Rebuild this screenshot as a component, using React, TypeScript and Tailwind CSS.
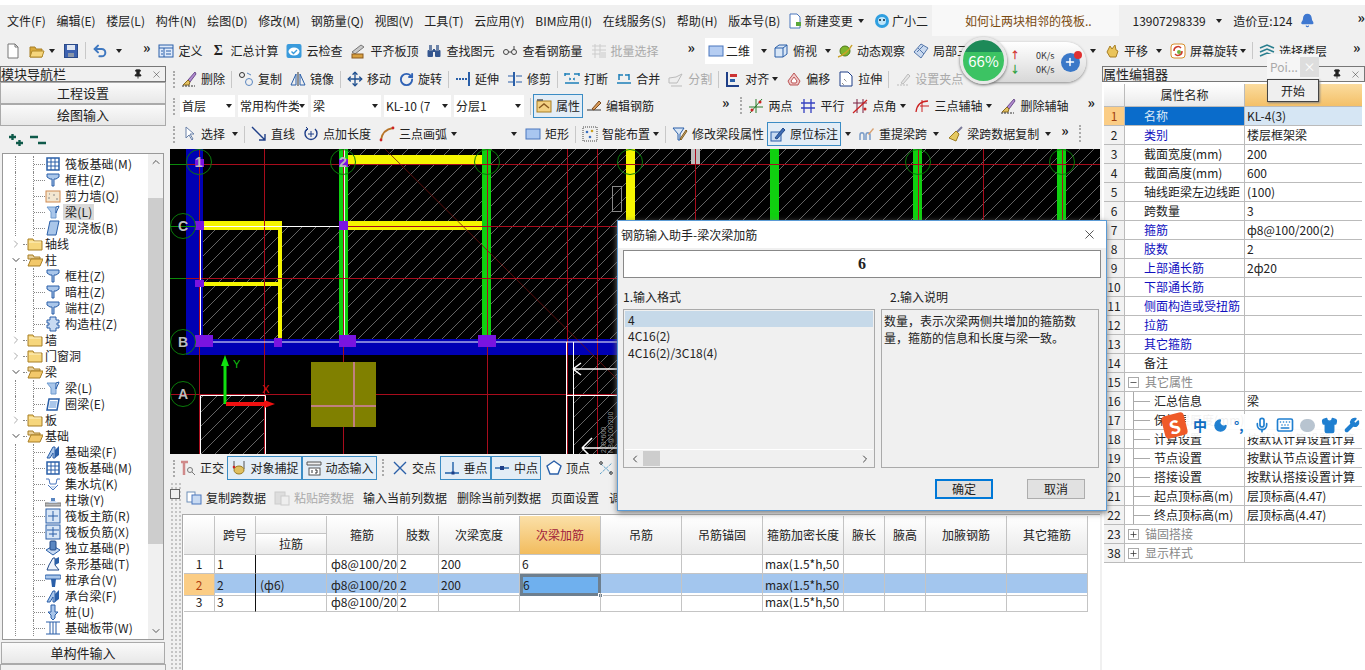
import React from 'react';
import { Move, RotateCw, Undo2, Plus, Minus, X, Pin, ChevronRight, ChevronDown, ChevronUp, ChevronLeft, Mic, Keyboard, Shirt, Wrench, Moon, Bell } from 'lucide-react';

const Svg = ({ children, s = 16 }: { children: React.ReactNode; s?: number }) => (
  <svg viewBox="0 0 16 16" width={s} height={s} fill="none" className="shrink-0">{children}</svg>
);
const B = '#2a5fa8', L = '#a9c6ea';
const colI = <Svg><path d="M2 2h12v3l-3 2H9v7H7V7H5L2 5z" fill={L} stroke={B} /></Svg>;
const raft = <Svg><rect x="2" y="2" width="12" height="12" fill="#fff" stroke={B} strokeWidth="1.5" /><path d="M2 6h12M2 10h12M6 2v12M10 2v12" stroke={B} /></Svg>;
const fbeam = <Svg><path d="M2 14L8 3h2v11H8V9l-3 5z" fill={L} stroke={B} /><path d="M10 6l4-4v9l-4 3z" fill={B} /></Svg>;
const ring = <Svg><path d="M4 3h10l-2 11H2z" fill="#fff" stroke={B} strokeWidth="1.5" /><path d="M5 5h7l-1 7H4z" fill={L} /></Svg>;
const beam = <Svg><path d="M2 3h12l-3 4v7H6V8z" fill={L} stroke="#6f9bcf" /><path d="M11 3l3-1-3 7z" fill="#fff" stroke={B} /></Svg>;
const icons: Record<string, React.ReactNode> = {
  doc: <Svg><path d="M3 1h7l3 3v11H3z" fill="#fff" stroke="#777" /><path d="M10 1v3h3" stroke="#777" /></Svg>,
  folder: <Svg><path d="M1 4h5l1 2h6v8H1z" fill="#d9a93a" stroke="#a87f25" /><path d="M3 8h12l-2 6H1z" fill="#f6d67c" stroke="#b08a2c" /></Svg>,
  save: <Svg><rect x="1.5" y="1.5" width="13" height="13" fill="#3d62b0" stroke="#2a4a88" /><rect x="4" y="2" width="8" height="5" fill="#dfe6f2" /><rect x="5" y="10" width="6" height="4" fill="#8a96a8" /></Svg>,
  undo: <Undo2 size={16} strokeWidth={3} color="#3f78c0" className="shrink-0" />,
  define: <Svg><rect x="1" y="2" width="14" height="12" fill="#dfeafa" stroke={B} /><path d="M1 5h14M6 5v9M3 8h2M3 11h2M8 8h5M8 11h5" stroke={B} /></Svg>,
  sigma: <span className="w-4 shrink-0 text-center font-['Liberation_Serif',serif] text-[14px] font-bold leading-4">Σ</span>,
  cloud: <Svg><rect x="0.5" y="1" width="15" height="14" rx="2" fill="#3a9bdc" /><ellipse cx="8" cy="8.5" rx="5.5" ry="4" fill="#fff" /><path d="M5.5 8.5L7.5 10.5L11 7" stroke="#3a9bdc" strokeWidth="1.4" /></Svg>,
  level: <Svg><path d="M2 9l9-7 3 2-9 7z" fill="#c9c9c9" stroke="#777" /><rect x="2" y="11" width="11" height="4" fill="#d8a040" stroke="#8a5a20" /></Svg>,
  binoc: <Svg><rect x="1.5" y="7" width="5.5" height="7" rx="1" fill="#34568f" /><rect x="9" y="7" width="5.5" height="7" rx="1" fill="#34568f" /><rect x="3" y="2" width="3" height="6" fill="#6c83a8" /><rect x="10" y="2" width="3" height="6" fill="#6c83a8" /><rect x="7" y="6" width="2" height="3" fill="#34568f" /></Svg>,
  glasses: <Svg><circle cx="4" cy="9" r="2.5" stroke="#444" /><circle cx="12" cy="9" r="2.5" stroke="#444" /><path d="M6.5 9h3M12 7V3" stroke="#444" /></Svg>,
  batch: <Svg><path d="M1 3h14M1 7h14M1 11h14M4 1v14M9 1v14" stroke="#ccc" /><rect x="9" y="9" width="6" height="6" fill="#ddd" /></Svg>,
  view2d: <Svg><rect x="1" y="3" width="14" height="10" fill="#b5cdf2" stroke="#4a76bd" /></Svg>,
  cube: <Svg><path d="M2 5l4-3h8v9l-4 3H2z" fill="#d8e6f6" stroke={B} /><path d="M2 5h8v9M10 5l4-3" stroke={B} /></Svg>,
  orbit: <Svg><circle cx="8" cy="8" r="5" fill="#7eb52c" stroke="#4f7a18" /><path d="M1 14C5 13 12 8 15 2" stroke="#caa12a" strokeWidth="1.5" /></Svg>,
  local3d: <Svg><path d="M8 1l7 4-7 10-7-6z" fill="#c9d9ef" stroke="#5577aa" /><path d="M5 5l6 6M10 3L4 9" stroke="#5577aa" /></Svg>,
  pan: <Svg><path d="M3 9l3-6 2 3 3-4 1 5 2 1-2 6H6z" fill="#eac45a" stroke="#a87f25" /></Svg>,
  rotate: <Svg><rect x="1" y="1" width="14" height="14" rx="3" fill="#fff" stroke="#d88d2a" /><path d="M4 8a4 4 0 017-3M12 8a4 4 0 01-7 3" stroke="#cc3a2a" strokeWidth="1.5" /><circle cx="9" cy="9" r="2" fill="#6fb43f" /></Svg>,
  floors: <Svg><path d="M1 5l7-3 7 3M1 9l7-3 7 3M1 13l7-3 7 3" stroke="#2a7f8f" strokeWidth="1.6" /></Svg>,
  del: <Svg><path d="M14 1L7 9l2 2 6-8z" fill="#b28ad0" stroke="#6b4d8c" /><path d="M7 9L2 14h6l1-3z" fill="#e2c060" stroke="#8b6b20" /><path d="M1 15h13" stroke="#333" strokeDasharray="2 1" /></Svg>,
  copy: <Svg><circle cx="4" cy="4" r="2.5" stroke="#333" /><circle cx="11" cy="11" r="3.5" stroke="#5a86c0" /><path d="M9 2l4 2" stroke="#5a86c0" /></Svg>,
  mirror: <Svg><path d="M8 1v14" stroke="#333" /><path d="M6 3L1 14h5zM10 3l5 11h-5z" stroke={B} /></Svg>,
  move: <Move size={16} color="#1f4f8f" className="shrink-0" />,
  rot: <RotateCw size={15} strokeWidth={3} color="#2f62b5" className="shrink-0" />,
  extend: <Svg><path d="M14 1v14" stroke={B} strokeWidth="2" /><path d="M1 8h11" stroke={B} strokeDasharray="2 1" strokeWidth="2" /></Svg>,
  trim: <Svg><path d="M7 1v14" stroke={B} strokeWidth="2" /><path d="M1 5h5M1 11h5M9 5h6M9 11h6" stroke={B} /></Svg>,
  brk: <Svg><path d="M1 3h5M10 3h5M1 12h14M1 5v-3M15 5V2" stroke="#1c7fb8" strokeWidth="1.5" /><path d="M5 7l2 1-2 1M11 7L9 8l2 1" stroke="#1c7fb8" /></Svg>,
  merge: <Svg><path d="M1 12h14M3 4h4M9 4h4M3 9V3M13 9V3" stroke="#1c7fb8" strokeWidth="1.5" /></Svg>,
  split: <Svg><path d="M1 12h8l5-9-6 3-7 1z" fill="#eee" stroke="#bbb" /><path d="M3 15h11" stroke="#bbb" /></Svg>,
  align: <Svg><path d="M2 1v14h12" stroke="#1f3f88" strokeWidth="2" /><rect x="5" y="3" width="7" height="3" fill="#c33" /><rect x="5" y="8" width="5" height="3" fill={B} /></Svg>,
  offset: <Svg><path d="M8 2l6 8-2 4H4l-2-4z" fill="#f0c8c8" stroke="#b55" /><path d="M8 6l3 4-1 2H6l-1-2z" fill="#fff" stroke="#b55" /></Svg>,
  stretch: <Svg><path d="M2 1h8l4 4v10H2z" fill="#fff" stroke="#1f3f88" /><path d="M6 8l3 3M4 12l2 2" stroke="#555" strokeDasharray="1 1" /></Svg>,
  setp: <Svg><path d="M2 14h12" stroke="#bbb" strokeDasharray="2 1" /><path d="M6 12l7-9 2 2-7 8z" fill="#e5e5e5" stroke="#bbb" /></Svg>,
  attr: <Svg><rect x="1" y="3" width="14" height="11" fill="#f3d183" stroke="#a87f25" /><path d="M3 10l5-4 5 4" stroke="#8a5a20" strokeWidth="1.4" /><path d="M1 2h6" stroke="#555" strokeWidth="1.5" /></Svg>,
  edit: <Svg><path d="M1 12h14" stroke="#333" /><path d="M6 11l7-8 2 2-7 7z" fill="#d89b5a" stroke="#7a4a20" /></Svg>,
  two: <Svg><path d="M2 15L14 1M1 9h14M8 1v14" stroke="#2a7a2a" /><circle cx="4" cy="12" r="1.5" fill="#c22" /><circle cx="12" cy="4" r="1.5" fill="#c22" /></Svg>,
  par: <Svg><path d="M4 1v14M11 1v14M1 5h14M1 10h14" stroke="#3440c0" strokeWidth="1.3" /></Svg>,
  ang: <Svg><path d="M5 1v14M11 1v14M1 5h14" stroke="#7a1f3f" /><path d="M1 15L15 2" stroke="#c22" strokeWidth="1.3" /><circle cx="13" cy="11" r="1.5" fill="#c22" /></Svg>,
  three: <Svg><path d="M2 14C3 6 8 3 14 3" stroke="#c22" strokeWidth="1.3" /><path d="M8 2v12M6 8h9" stroke="#c22" /></Svg>,
  sel: <Svg><path d="M5 1v11l3-3 3 5 1-1-3-5h4z" fill="#fff" stroke="#6880a8" /></Svg>,
  line: <Svg><path d="M1 1l13 13M14 8v6H8" stroke="#1f3f88" strokeWidth="1.4" /></Svg>,
  ptlen: <Svg><path d="M4 3a6 6 0 108 0" stroke="#1f3f88" strokeWidth="1.4" /><path d="M8 5v6M5 8h6M3 1l2 2-2 2" stroke="#1f3f88" /></Svg>,
  arc: <Svg><path d="M2 14C3 7 7 3 14 2" stroke="#b8762a" strokeWidth="1.8" /><circle cx="2" cy="14" r="1.4" fill="#c22" /><circle cx="14" cy="2" r="1.4" fill="#c22" /></Svg>,
  rect: <Svg><rect x="1" y="3" width="14" height="10" fill="#a9c6f0" stroke="#4a76bd" /></Svg>,
  smart: <Svg><rect x="1" y="1" width="14" height="14" stroke="#444" strokeDasharray="1 1" /><circle cx="5" cy="6" r="1.3" fill="#3a6fc0" /><circle cx="10" cy="5" r="1.3" fill="#c8a020" /><circle cx="8" cy="11" r="1.3" fill="#3a6fc0" /></Svg>,
  mod: <Svg><path d="M1 2h11L8 8v6H6V8z" fill="#d8e6f6" stroke={B} /><path d="M8 13l6-9 1 1-6 9z" fill="#d8b070" stroke="#7a5a20" /></Svg>,
  inplace: <Svg><rect x="1" y="6" width="10" height="9" fill="#c8daf2" stroke={B} /><path d="M5 12L13 2l2 2-8 9z" fill="#3f6db5" stroke="#234a88" /></Svg>,
  rebeam: <Svg><path d="M1 14V9c0-3 4-3 4 0v5M7 14V9c0-3 4-3 4 0v5" stroke="#7a9cc8" strokeWidth="1.5" /><path d="M9 8l5-6 1 1-5 6z" fill="#d8a070" /></Svg>,
  broom: <Svg><path d="M15 1L9 7" stroke="#7a7a9a" strokeWidth="2" /><path d="M9 5l3 3-3 7-7-3z" fill="#e5c860" stroke="#9a7a20" /></Svg>,
  ortho: <Svg><path d="M1 2h7M4 2v13" stroke="#d08a8a" strokeWidth="2.5" /><circle cx="10" cy="10" r="2.5" stroke="#777" /><path d="M12 12l3 3" stroke="#777" /></Svg>,
  snap: <Svg><path d="M3 1v8M13 1v8" stroke="#555" /><ellipse cx="8" cy="10" rx="5" ry="4" fill="#e0c060" stroke="#9a7a20" /><circle cx="3" cy="7" r="1.3" fill="#c22" /></Svg>,
  dyn: <Svg><path d="M1 2h14v3H1z" fill="#eee" stroke="#555" /><rect x="3" y="8" width="11" height="7" fill="#fff" stroke="#555" /><path d="M6 10v3M9 10h2v3H9" stroke="#333" /></Svg>,
  cross: <Svg><path d="M2 2l12 12M14 2L2 14" stroke={B} strokeWidth="1.4" /></Svg>,
  perp: <Svg><path d="M1 13h14M9 2v11" stroke="#1f5fa8" strokeWidth="1.4" /><rect x="7.5" y="11.5" width="3" height="3" fill="#1f3f88" /></Svg>,
  mid: <Svg><path d="M1 8h14" stroke="#1f5fa8" strokeWidth="1.4" /><rect x="6" y="6" width="4" height="4" fill="#1f3f88" /></Svg>,
  vert: <Svg><path d="M8 1l7 5-3 8H4L1 6z" fill="#fff" stroke={B} strokeWidth="1.4" /></Svg>,
  near: <Svg><path d="M2 14L14 3M3 4l10 9" stroke="#1c7fb8" strokeDasharray="1 1" /><circle cx="3" cy="3" r="1.3" stroke="#333" /><circle cx="13" cy="13" r="1.3" stroke="#333" /></Svg>,
  copyS: <Svg><rect x="1" y="2" width="8" height="10" fill="#fff" stroke="#6f8fb8" /><rect x="6" y="5" width="9" height="9" fill="#c8daf2" stroke="#4a76bd" /></Svg>,
  paste: <Svg><rect x="1" y="2" width="10" height="12" fill="#ddd" stroke="#ccc" /><rect x="7" y="6" width="8" height="9" fill="#eee" stroke="#ccc" /></Svg>,
  wall: <Svg><rect x="1" y="3" width="14" height="11" fill="#f3e6d0" stroke="#d08a50" /><path d="M3 10h2M8 7h2M11 11h2M4 6h1" stroke="#888" /></Svg>,
  col: colI, raft, beam, ring, fbeam,
  slab: <Svg><path d="M5 1h9l-3 14H2z" fill="#a9c6ea" stroke={B} /></Svg>,
  constr: <Svg><path d="M5 1h6v3h3v3h-2v2h2v3h-3v3H5v-3H2V9h2V7H2V4h3z" fill="#c8daf2" stroke={B} /></Svg>,
  pit: <Svg><path d="M1 3h3l1 5h6l1-5h3M3 9l5 5 5-5" stroke="#4a76bd" /><path d="M5 10h6l-3 3z" fill="#c8daf2" /></Svg>,
  pier: <Svg><rect x="0" y="11" width="16" height="3" fill="#bbb" stroke="#777" /><path d="M6 10V6h4v4z" fill="#5a86c0" /><path d="M3 11l3-2h4l3 2z" fill="#c8daf2" /></Svg>,
  main: <Svg><rect x="1" y="1" width="14" height="14" fill="#d8e6f6" stroke={B} /><path d="M3 8h10M8 3v10" stroke={B} /></Svg>,
  neg: <Svg><rect x="1" y="1" width="14" height="14" fill="#d8e6f6" stroke={B} /><path d="M2 6h12M4 10h8M8 3v10" stroke={B} /></Svg>,
  iso: <Svg><path d="M1 10l7-4 7 4-7 5z" fill="#c8daf2" stroke={B} /><rect x="5" y="1" width="6" height="9" rx="1" fill="#5a86c0" stroke="#234a88" /></Svg>,
  strip: <Svg><path d="M2 14l2-5 4-7h2v7l4 5z" fill="#eef3fb" stroke="#234a88" /><path d="M10 3l4-2v6l-4 2z" fill={B} /></Svg>,
  cap: <Svg><rect x="0" y="3" width="16" height="4" rx="1" fill="#a9c6ea" stroke={B} /><path d="M6 7h5l-1 8H7z" fill={B} /></Svg>,
  pile: <Svg><path d="M6 1h4v7h3l-3 3v3l-2 2-2-2v-3L3 8h3z" fill="#a9c6ea" stroke={B} /></Svg>,
  band: <Svg><path d="M1 2h14M1 14h14M5 2v12M11 2v12M8 2v12" stroke={B} /></Svg>,
};

const Caret = () => (
  <svg width="6" height="4" viewBox="0 0 6 4" className="shrink-0"><path d="M0 0h6L3 4z" fill="#222" /></svg>
);
const Sep = () => <span className="mx-[-2px] h-[17px] w-px shrink-0 bg-[#c8c8c8]" />;
const Grip = ({ c = '' }: { c?: string }) => <span className={`h-[17px] w-0 shrink-0 border-l-2 border-dotted border-[#aaa] ${c}`} />;
const More = ({ c = '' }: { c?: string }) => <span className={`mb-[8px] text-[14px] font-bold leading-4 text-[#222] ${c}`}>»</span>;

const Tool = ({ i, t, dis, active, w }: { i: string; t: string; dis?: boolean; active?: boolean; w?: string }) => (
  <div className={`flex shrink-0 items-center gap-[4px] whitespace-nowrap ${dis ? 'text-[#aaa]' : ''} ${active ? 'h-[24px] justify-center border border-[#3b8cc4] bg-[#e3edf6]' : ''} ${w ?? ''}`}>
    {icons[i]}
    <span>{t}</span>
  </div>
);
const Combo = ({ t, w }: { t: string; w: string }) => (
  <div className={`flex h-[22px] shrink-0 items-center justify-between overflow-hidden whitespace-nowrap bg-white pl-[2px] pr-[3px] ${w}`}>
    <span className="overflow-hidden">{t}</span><Caret />
  </div>
);

const menu = ['文件(F)', '编辑(E)', '楼层(L)', '构件(N)', '绘图(D)', '修改(M)', '钢筋量(Q)', '视图(V)', '工具(T)', '云应用(Y)', 'BIM应用(I)', '在线服务(S)', '帮助(H)', '版本号(B)'];

type Row = { l: 0 | 1; i: string; t: string; open?: boolean; sel?: boolean };
const tree: Row[] = [
  { l: 1, i: 'raft', t: '筏板基础(M)' }, { l: 1, i: 'col', t: '框柱(Z)' }, { l: 1, i: 'wall', t: '剪力墙(Q)' }, { l: 1, i: 'beam', t: '梁(L)', sel: true }, { l: 1, i: 'slab', t: '现浇板(B)' },
  { l: 0, i: 'c', t: '轴线' }, { l: 0, i: 'o', t: '柱', open: true }, { l: 1, i: 'col', t: '框柱(Z)' }, { l: 1, i: 'col', t: '暗柱(Z)' }, { l: 1, i: 'col', t: '端柱(Z)' }, { l: 1, i: 'constr', t: '构造柱(Z)' },
  { l: 0, i: 'c', t: '墙' }, { l: 0, i: 'c', t: '门窗洞' }, { l: 0, i: 'o', t: '梁', open: true }, { l: 1, i: 'beam', t: '梁(L)' }, { l: 1, i: 'ring', t: '圈梁(E)' },
  { l: 0, i: 'c', t: '板' }, { l: 0, i: 'o', t: '基础', open: true }, { l: 1, i: 'fbeam', t: '基础梁(F)' }, { l: 1, i: 'raft', t: '筏板基础(M)' }, { l: 1, i: 'pit', t: '集水坑(K)' }, { l: 1, i: 'pier', t: '柱墩(Y)' },
  { l: 1, i: 'main', t: '筏板主筋(R)' }, { l: 1, i: 'neg', t: '筏板负筋(X)' }, { l: 1, i: 'iso', t: '独立基础(P)' }, { l: 1, i: 'strip', t: '条形基础(T)' }, { l: 1, i: 'cap', t: '桩承台(V)' }, { l: 1, i: 'fbeam', t: '承台梁(F)' }, { l: 1, i: 'pile', t: '桩(U)' }, { l: 1, i: 'band', t: '基础板带(W)' },
];
const FolderC = () => <Svg><path d="M1 3h5l1 2h8v9H1z" fill="#f6d67c" stroke="#a87f25" /><path d="M2 6h12" stroke="#fff3c8" /></Svg>;
const FolderO = () => <Svg><path d="M1 3h5l1 2h6v2H1z" fill="#e8cf98" stroke="#a87f25" /><path d="M4 7h12l-3 7H1z" fill="#f2c86a" stroke="#a87f25" /></Svg>;

const TreeRow = ({ r }: { r: Row }) =>
  r.l === 0 ? (
    <div className="flex h-4 items-center whitespace-nowrap">
      <span className="flex w-[20px] shrink-0 justify-end pr-[1px]">
        {r.open ? <ChevronDown size={12} color="#444" /> : <ChevronRight size={12} color="#aaa" />}
      </span>
      <span className="w-[4px] shrink-0 border-t border-dotted border-[#888]" />
      {r.open ? <FolderO /> : <FolderC />}
      <span className="ml-[2px]">{r.t}</span>
    </div>
  ) : (
    <div className="flex h-4 items-center whitespace-nowrap">
      <span className="ml-[12px] h-full w-[18px] shrink-0 border-l border-dotted border-[#888]" />
      <span className="flex h-full w-[12px] shrink-0 items-center border-l border-dotted border-[#888]"><span className="w-full border-t border-dotted border-[#888]" /></span>
      {icons[r.i]}
      <span className={`ml-[2px] px-[2px] tracking-[0.2px] ${r.sel ? 'bg-[#d9d9d9]' : ''}`}>{r.t}</span>
    </div>
  );

const PanelTitle = ({ t }: { t: string }) => (
  <div className="flex h-[16px] items-center justify-between border border-[#777] bg-[#f0f0f0] pr-[3px] text-[13px] leading-[14px]">
    <span>{t}</span>
    <span className="flex items-center gap-[8px]"><Pin size={10} fill="#222" color="#222" /><X size={11} strokeWidth={1} color="#222" /></span>
  </div>
);
const SideBtn = ({ t }: { t: string }) => (
  <div className="flex h-[22px] items-center justify-center border border-[#aaa] bg-[linear-gradient(#fafafa,#e8e8e8)] text-[13px]">{t}</div>
);

const props: { n: string; name: string; v?: string; blue?: boolean; sub?: boolean; grp?: '-' | '+'; sel?: boolean }[] = [
  { n: '1', name: '名称', v: 'KL-4(3)', sel: true }, { n: '2', name: '类别', v: '楼层框架梁', blue: true }, { n: '3', name: '截面宽度(mm)', v: '200' }, { n: '4', name: '截面高度(mm)', v: '600' },
  { n: '5', name: '轴线距梁左边线距', v: '(100)' }, { n: '6', name: '跨数量', v: '3' }, { n: '7', name: '箍筋', v: 'ф8@100/200(2)', blue: true }, { n: '8', name: '肢数', v: '2', blue: true },
  { n: '9', name: '上部通长筋', v: '2ф20', blue: true }, { n: '10', name: '下部通长筋', blue: true }, { n: '11', name: '侧面构造或受扭筋', blue: true }, { n: '12', name: '拉筋', blue: true }, { n: '13', name: '其它箍筋', blue: true }, { n: '14', name: '备注' },
  { n: '15', name: '其它属性', grp: '-' }, { n: '16', name: '汇总信息', v: '梁', sub: true }, { n: '17', name: '保护层厚度(mm)', sub: true }, { n: '18', name: '计算设置', v: '按默认计算设置计算', sub: true }, { n: '19', name: '节点设置', v: '按默认节点设置计算', sub: true },
  { n: '20', name: '搭接设置', v: '按默认搭接设置计算', sub: true }, { n: '21', name: '起点顶标高(m)', v: '层顶标高(4.47)', sub: true }, { n: '22', name: '终点顶标高(m)', v: '层顶标高(4.47)', sub: true }, { n: '23', name: '锚固搭接', grp: '+' }, { n: '38', name: '显示样式', grp: '+' },
];

const gridCols = 'w-[904px] grid-cols-[31px_41px_71px_71px_41px_81px_81px_81px_81px_81px_41px_41px_81px_81px]';
const Head = ({ t, hot }: { t: string; hot?: boolean }) => (
  <div className={`flex items-center justify-center whitespace-nowrap border-r border-b border-[#c4c4c4] ${hot ? 'bg-[linear-gradient(#fbe0a8,#f2bc5e)] text-[#a0203a]' : 'bg-[linear-gradient(#fff,#eaeaea)]'}`}>{t}</div>
);
const rows = [
  { n: '1', c: ['1', '', 'ф8@100/20', '2', '200', '6'] },
  { n: '2', c: ['2', '(ф6)', 'ф8@100/20', '2', '200', '6'], on: true },
  { n: '3', c: ['3', '', 'ф8@100/20', '2', '', ''] },
];

const Canvas = () => {
  const red = '#a80c1c';
  const vs = [29, 94, 173, 317, 397, 427, 525, 748, 813, 892];
  const hs = [15, 77, 129, 245];
  const circles: [number, number, string][] = [[29, 13, '1'], [173, 13, '2'], [317, 13, ''], [13, 77, 'C'], [13, 193, 'B'], [13, 245, 'A'], [460, 13, ''], [748, 13, ''], [892, 13, '']];
  const purple: number[][] = [[25, 10, 9, 8], [169, 10, 9, 8], [25, 72, 9, 9], [169, 72, 9, 9], [25, 131, 9, 7], [25, 186, 18, 12], [104, 189, 8, 9], [169, 186, 17, 12], [308, 186, 18, 12]];
  return (
    <svg width="930" height="305" viewBox="0 0 930 305" className="block shrink-0">
      <defs>
        <pattern id="hatch" width="14" height="14" patternUnits="userSpaceOnUse">
          <path d="M-1 15L15 -1" stroke="#c8c8c8" strokeWidth="0.5" />
        </pattern>
      </defs>
      <rect width="930" height="305" fill="#000" />
      <rect x="178" width="752" height="190" fill="url(#hatch)" />
      <rect x="31" y="78" width="140" height="112" fill="url(#hatch)" />
      <rect x="31" y="247" width="64" height="58" fill="url(#hatch)" />
      <rect x="403" y="195" width="44" height="110" fill="url(#hatch)" />
      <rect x="16" width="17" height="190" fill="#0000b4" />
      <rect x="16" y="190" width="432" height="16" fill="#0000b4" />
      <rect x="169" width="9" height="186" fill="#10d010" />
      <rect x="173" width="2" height="186" fill="#f2f2f2" />
      {[312, 600, 743, 887].map(x => <rect key={x} x={x} width="9" height="190" fill="#10d010" />)}
      <rect x="456" width="9" height="75" fill="#f5f500" />
      <rect x="178" y="6" width="134" height="9" fill="#f5f500" />
      <rect x="178" y="72" width="134" height="9" fill="#f5f500" />
      <rect x="33" y="72" width="79" height="9" fill="#f5f500" />
      <rect x="108" y="78" width="4" height="111" fill="#f5f500" />
      <rect x="33" y="133" width="75" height="4" fill="#f5f500" />
      <rect x="521" width="9" height="15" fill="#bbb" />
      <rect x="442.5" y="37.5" width="9" height="25" stroke="#888" fill="none" />
      <path d="M215 0L447 230" stroke="#701010" strokeWidth="0.8" />
      {hs.map(y => <line key={y} x1="0" x2="930" y1={y + 0.5} y2={y + 0.5} stroke={red} />)}
      {vs.map(x => <line key={x} y1="0" y2="305" x1={x + 0.5} x2={x + 0.5} stroke={red} />)}
      <path d="M0 15.5H16M0 77.5H30M0 129.5H16" stroke="#0a8a0a" />
      <path d="M30.5 193V77.5H173M30.5 193H448M30.5 305V246.5H95.5V305M396.5 193V305M403.5 193V305M396 246.5H448" stroke="#fff" fill="none" />
      <path d="M403 220h44M403 220l8-6M403 220l8 6M412 299h36M412 299l10-10M412 299l10 10" stroke="#fff" strokeWidth="1.5" fill="none" />
      {purple.map((p, i) => <rect key={i} x={p[0]} y={p[1]} width={p[2]} height={p[3]} fill="#7a14e0" />)}
      {circles.map(([x, y, t], i) => (
        <g key={i}>
          <circle cx={x} cy={y} r="12.5" stroke="#0a7a0a" fill="none" />
          {t && <text x={x} y={y + 5} textAnchor="middle" fontSize="14" fontWeight="700" fontFamily="Liberation Sans" fill="#bbb">{t}</text>}
        </g>
      ))}
      <rect x="141" y="213" width="65" height="65" fill="#808000" />
      <path d="M141 257H206M184 213V278" stroke="#c08080" strokeWidth="2" />
      <path d="M55 255V215" stroke="#10e010" strokeWidth="3" /><path d="M55 206l-4 11h8z" fill="#10e010" />
      <path d="M56 255H96" stroke="#f01010" strokeWidth="4" /><path d="M105 255l-11-4v8z" fill="#f01010" />
      <text x="63" y="219" fontSize="11" fontFamily="Liberation Sans" fill="#10c010">Y</text>
      <text x="92" y="244" fontSize="11" fontFamily="Liberation Sans" fill="#e01010">X</text>
      <text transform="translate(436 304) rotate(-90)" fontSize="7" fontFamily="Liberation Sans" fill="#999">200*600</text>
      <text transform="translate(443 304) rotate(-90)" fontSize="7" fontFamily="Liberation Sans" fill="#999">N8@100/200</text>
    </svg>
  );
};

export default function App() {
  return (
    <div className="relative h-[670px] w-[1365px] overflow-hidden bg-[#f0f0f0] font-['Noto_Sans_CJK_SC','Liberation_Sans',sans-serif] text-[12px] leading-[16px] text-[#222]">
      <div className="h-[5px] bg-white" />
      {/* menu */}
      <div className="flex h-[31px] items-center gap-[10.7px] whitespace-nowrap pl-[7px]">
        {menu.map(m => <span key={m}>{m}</span>)}
        <span className="ml-[-4px]"><Svg><path d="M3 1h7l3 3v11H3z" fill="#fff" stroke="#4a76bd" /><path d="M9 9h5v4H9z" fill="#5aa83a" /></Svg></span>
        <span className="ml-[-9px] flex items-center gap-[5px]">新建变更<Caret /></span>
        <Svg><circle cx="8" cy="8" r="7" fill="#2f9fe0" /><circle cx="8" cy="8" r="4" fill="#bfe6fa" /><circle cx="6" cy="7" r="1" fill="#123" /><circle cx="10" cy="7" r="1" fill="#123" /></Svg>
        <span className="ml-[-9px]">广小二</span>
        <div className="ml-[-7px] flex h-[31px] w-[190px] items-center justify-center bg-[#f8f8f8] pl-[6px] text-[#7a4a10]">如何让两块相邻的筏板..</div>
        <span className="ml-[3px]">13907298339</span>
        <Caret />
        <span>造价豆:124</span>
        <Bell size={15} fill="#3f78d0" color="#3f78d0" className="ml-[-3px]" />
        <More c="ml-[32px]" />
      </div>
      {/* toolbar */}
      <div className="flex h-[29px] items-center gap-[8px] whitespace-nowrap pl-[5px]">
        {icons.doc}
        <span className="flex items-center gap-[4px]">{icons.folder}<Caret /></span>
        {icons.save}
        <Sep />
        {icons.undo}
        <Caret />
        <More c="ml-[13px]" />
        <Tool i="define" t="定义" />
        <Tool i="sigma" t="汇总计算" />
        <Tool i="cloud" t="云检查" />
        <Tool i="level" t="平齐板顶" />
        <Tool i="binoc" t="查找图元" />
        <Tool i="glasses" t="查看钢筋量" />
        <Tool i="batch" t="批量选择" dis />
        <More c="ml-[21px]" />
        <div className="ml-[2px] flex h-[26px] items-center gap-[2px] bg-white px-[3px]">{icons.view2d}<span>二维</span></div>
        <Caret />
        <Tool i="cube" t="俯视" w="ml-[-2px]" />
        <Caret />
        <Tool i="orbit" t="动态观察" w="ml-[-2px]" />
        <Tool i="local3d" t="局部三维" />
        <span className="ml-[101px]"><Caret /></span>
        <Tool i="pan" t="平移" />
        <Caret />
        <Tool i="rotate" t="屏幕旋转" />
        <span className="ml-[-6px]"><Caret /></span>
        <Sep />
        <Tool i="floors" t="选择楼层" />
        <More c="ml-[18px]" />
      </div>
      {/* main */}
      <div className="flex h-[605px]">
        {/* left */}
        <div className="flex w-[166px] shrink-0 flex-col">
          <div className="mt-[1px]"><PanelTitle t="模块导航栏" /></div>
          <SideBtn t="工程设置" />
          <SideBtn t="绘图输入" />
          <div className="flex h-[27px] items-center gap-[6px] pl-[8px]">
            <svg width="16" height="16" viewBox="0 0 16 16"><path d="M1 5h7M4.5 2v6M8 11h7M11.5 8v6" stroke="#0f5a4a" strokeWidth="2.4" /></svg>
            <svg width="16" height="16" viewBox="0 0 16 16"><path d="M0 5h8M8 11h8" stroke="#0f5a4a" strokeWidth="2.4" /></svg>
          </div>
          <div className="mx-[2px] flex h-[487px] shrink-0 overflow-hidden border border-[#999] bg-white">
            <div className="min-w-0 flex-1 overflow-hidden pt-[2px]">{tree.map((r, i) => <TreeRow key={i} r={r} />)}</div>
            <div className="flex w-[15px] shrink-0 flex-col items-center justify-between bg-[#f0f0f0]">
              <ChevronUp size={12} color="#555" className="my-[2px]" />
              <div className="mb-auto mt-[28px] h-[346px] w-full bg-[#cdcdcd]" />
              <ChevronDown size={12} color="#555" className="my-[2px]" />
            </div>
          </div>
          <div className="mt-[2px] px-[1px]"><SideBtn t="单构件输入" /></div>
          <div className="h-[6px] border-x border-t border-[#aaa]" />
        </div>
        {/* center */}
        <div className="flex w-[934px] shrink-0 flex-col pl-[4px]">
          <div className="flex h-[28px] items-center gap-[8px] whitespace-nowrap pl-[3px]">
            <Grip c="mr-[-2px]" />
            <Tool i="del" t="删除" /><Sep /><Tool i="copy" t="复制" /><Tool i="mirror" t="镜像" /><Sep /><Tool i="move" t="移动" /><Tool i="rot" t="旋转" /><Sep />
            <Tool i="extend" t="延伸" /><Tool i="trim" t="修剪" /><Sep /><Tool i="brk" t="打断" /><Tool i="merge" t="合并" /><Tool i="split" t="分割" dis /><Sep />
            <div className="flex items-center gap-[3px]"><Tool i="align" t="对齐" /><Caret /></div>
            <Tool i="offset" t="偏移" /><Tool i="stretch" t="拉伸" /><Sep /><Tool i="setp" t="设置夹点" dis />
          </div>
          <div className="flex h-[26px] items-center whitespace-nowrap pl-[3px]">
            <Grip />
            <div className="ml-[5px] flex gap-[3px]">
              <Combo t="首层" w="w-[55px]" /><Combo t="常用构件类型" w="w-[70px]" /><Combo t="梁" w="w-[70px]" /><Combo t="KL-10 (7" w="w-[67px]" /><Combo t="分层1" w="w-[70px]" />
            </div>
            <span className="ml-[6px] h-[17px] w-px bg-[#c8c8c8]" />
            <Tool i="attr" t="属性" active w="ml-[2px] w-[50px]" />
            <Tool i="edit" t="编辑钢筋" w="ml-[3px]" />
            <More c="ml-[68px]" />
            <span className="ml-[11px]"><Grip /></span>
            <div className="ml-[6px] flex items-center gap-[8px]">
              <Tool i="two" t="两点" /><Tool i="par" t="平行" />
              <div className="flex items-center gap-[4px]"><Tool i="ang" t="点角" /><Caret /></div>
              <div className="flex items-center gap-[4px]"><Tool i="three" t="三点辅轴" /><Caret /></div>
              <Tool i="del" t="删除辅轴" />
              <More c="ml-[11px]" />
            </div>
          </div>
          <div className="flex h-[30px] items-center gap-[8px] whitespace-nowrap pl-[3px]">
            <Grip c="mr-[-2px]" />
            <div className="flex items-center gap-[7px]"><Tool i="sel" t="选择" /><Caret /></div>
            <Sep /><Tool i="line" t="直线" /><Tool i="ptlen" t="点加长度" />
            <div className="flex items-center gap-[4px]"><Tool i="arc" t="三点画弧" /><Caret /></div>
            <span className="ml-[46px]"><Caret /></span>
            <Tool i="rect" t="矩形" /><Sep />
            <div className="flex items-center gap-[3px]"><Tool i="smart" t="智能布置" /><Caret /></div>
            <Sep /><Tool i="mod" t="修改梁段属性" />
            <Tool i="inplace" t="原位标注" active w="ml-[-5px] w-[74px]" />
            <span className="ml-[-4px]"><Caret /></span>
            <div className="flex items-center gap-[6px]"><Tool i="rebeam" t="重提梁跨" /><Caret /></div>
            <div className="flex items-center gap-[6px]"><Tool i="broom" t="梁跨数据复制" /><Caret /></div>
            <More c="ml-[2px]" />
            <span className="ml-[2px]"><Grip /></span>
          </div>
          <Canvas />
          <div className="flex h-[28px] items-center whitespace-nowrap pl-[3px]">
            <Grip />
            <div className="ml-[5px]"><Tool i="ortho" t="正交" /></div>
            <Tool i="snap" t="对象捕捉" active w="ml-[3px] w-[75px]" />
            <Tool i="dyn" t="动态输入" active w="w-[75px]" />
            <span className="ml-[5px]"><Grip /></span>
            <div className="ml-[8px]"><Tool i="cross" t="交点" /></div>
            <Tool i="perp" t="垂点" active w="ml-[4px] w-[51px]" />
            <Tool i="mid" t="中点" active w="w-[50px]" />
            <div className="ml-[5px]"><Tool i="vert" t="顶点" /></div>
            <div className="ml-[8px]"><Tool i="near" t="最近点" /></div>
          </div>
          <div className="flex min-h-0 flex-1">
            <div className="w-[12px] shrink-0 bg-[radial-gradient(#c4c4c4_1px,transparent_1px)] bg-[length:4px_4px] pt-[7px]">
              <div className="h-[10px] w-[10px] border border-[#666] bg-[#f0f0f0]" />
            </div>
            <div className="flex min-w-0 flex-1 flex-col">
              <div className="flex h-[32px] items-center gap-[8px] whitespace-nowrap pl-[4px]">
                <Tool i="copyS" t="复制跨数据" />
                <Tool i="paste" t="粘贴跨数据" dis />
                <span className="ml-[1px]">输入当前列数据</span>
                <span className="ml-[2px]">删除当前列数据</span>
                <span className="ml-[2px]">页面设置</span>
                <span className="ml-[2px]">调换起始跨</span>
              </div>
              <div className="flex-1 border-l border-t border-[#aaa] bg-white pl-px pt-px">
                <div className={`grid h-[39px] ${gridCols}`}>
                  <Head t="" /><Head t="跨号" />
                  <div className="flex flex-col border-r border-b border-[#c4c4c4]">
                    <div className="h-[18px] border-b border-[#c4c4c4] bg-[linear-gradient(#fff,#f0f0f0)]" />
                    <div className="flex flex-1 items-center justify-center bg-[linear-gradient(#fff,#eaeaea)]">拉筋</div>
                  </div>
                  <Head t="箍筋" /><Head t="肢数" /><Head t="次梁宽度" /><Head t="次梁加筋" hot /><Head t="吊筋" /><Head t="吊筋锚固" /><Head t="箍筋加密长度" /><Head t="腋长" /><Head t="腋高" /><Head t="加腋钢筋" /><Head t="其它箍筋" />
                </div>
                {rows.map(r => (
                  <div key={r.n} className={`grid h-[19px] ${gridCols} ${r.on ? 'bg-[#a3c6ee]' : ''}`}>
                    <div className={`flex items-center justify-center border-r border-b border-[#c4c4c4] ${r.on ? 'bg-[#fbcd85] text-[#b04010]' : ''}`}>{r.n}</div>
                    <div className="flex items-center border-r border-b border-r-[#111] border-b-[#c4c4c4] pl-[2px]">{r.c[0]}</div>
                    <div className="flex items-center border-r border-b border-[#c4c4c4] pl-[4px]">{r.c[1]}</div>
                    <div className="flex items-center overflow-hidden whitespace-nowrap border-r border-b border-[#c4c4c4] pl-[4px]">{r.c[2]}</div>
                    <div className="flex items-center border-r border-b border-[#c4c4c4] pl-[2px]">{r.c[3]}</div>
                    <div className="flex items-center border-r border-b border-[#c4c4c4] pl-[2px]">{r.c[4]}</div>
                    <div className={`relative flex items-center ${r.on ? 'border-[3px] border-[#6d7f8f] bg-[#6fb0ee]' : 'border-r border-b border-[#c4c4c4] pl-[2px]'}`}>
                      {r.c[5]}
                      {r.on && <span className="absolute bottom-[-5px] right-[-5px] h-[5px] w-[5px] border border-white bg-[#6d7f8f]" />}
                    </div>
                    <div className="border-r border-b border-[#c4c4c4]" />
                    <div className="border-r border-b border-[#c4c4c4]" />
                    <div className="flex items-center overflow-hidden whitespace-nowrap border-r border-b border-[#c4c4c4] pl-[2px]">max(1.5*h,50</div>
                    <div className="border-r border-b border-[#c4c4c4]" />
                    <div className="border-r border-b border-[#c4c4c4]" />
                    <div className="border-r border-b border-[#c4c4c4]" />
                    <div className="border-r border-b border-[#c4c4c4]" />
                  </div>
                ))}
              </div>
            </div>
          </div>
        </div>
        {/* right */}
        <div className="flex w-[265px] shrink-0 flex-col pl-[2px]">
          <div className="mt-[1px]"><PanelTitle t="属性编辑器" /></div>
          <div className="flex-1 bg-white pl-[2px] pr-[3px] pt-[2px]">
            <div className="flex h-[23px] border-b border-[#bbb] bg-[linear-gradient(#fff,#eaeaea)]">
              <div className="w-[21px] border-r border-[#bbb]" />
              <div className="flex w-[120px] items-center justify-center border-r border-[#bbb]">属性名称</div>
              <div className="flex-1 bg-[linear-gradient(#fbdc9f,#f4c068)]" />
            </div>
            {props.map(p => (
              <div key={p.n} className="flex h-[19px] whitespace-nowrap border-b border-[#bbb]">
                <div className={`flex w-[21px] shrink-0 items-center justify-center border-r border-[#bbb] ${p.sel ? 'bg-[#fbcd85] text-[#a04010]' : 'bg-[#f2f2f2]'}`}>{p.n}</div>
                <div className={`flex w-[120px] shrink-0 items-center overflow-hidden border-r border-[#bbb] ${p.sel ? 'bg-[#0a6ccb] pl-[19px] text-[#dbe9f7]' : p.sub ? '' : p.grp ? 'pl-[3px] text-[#888]' : 'pl-[19px]'} ${p.blue ? 'text-[#1010c0]' : ''}`}>
                  {p.grp && <span className="mr-[6px] flex h-[11px] w-[11px] items-center justify-center border border-[#aaa] text-[#333]">{p.grp === '-' ? <Minus size={9} /> : <Plus size={9} />}</span>}
                  {p.sub && <span className="ml-[8px] mr-[4px] flex h-full w-[17px] shrink-0 items-center border-l border-[#aaa]"><span className="w-full border-t border-[#aaa]" /></span>}
                  {p.name}
                </div>
                <div className={`flex min-w-0 flex-1 items-center overflow-hidden pl-[2px] ${p.sel ? 'bg-[#d6e6f4]' : ''}`}>{p.v}</div>
              </div>
            ))}
          </div>
        </div>
      </div>

      {/* network widget */}
      <div className="absolute left-[960px] top-[37px] h-[48px] w-[127px]">
        <div className="absolute left-[14px] top-[5px] flex h-[40px] w-[112px] items-center rounded-full bg-[linear-gradient(#fff,#d8d8d8)] pl-[36px] shadow-[0_1px_3px_#888]">
          <div className="flex flex-col items-center gap-[2px] text-[10px] font-bold leading-[12px]"><span className="text-[#d03030]">↑</span><span className="text-[#30a040]">↓</span></div>
          <div className="ml-[16px] flex flex-col gap-[3px] text-[9px] leading-[11px] text-[#333]"><span>0K/s</span><span>0K/s</span></div>
          <div className="relative ml-[6px] flex h-[19px] w-[19px] items-center justify-center rounded-full bg-[#3a78c8]"><Plus size={12} color="#fff" strokeWidth={3} /><span className="absolute right-[-2px] top-[-2px] h-[8px] w-[8px] rounded-full bg-[#e03030]" /></div>
        </div>
        <div className="absolute left-0 top-0 flex h-[47px] w-[47px] items-center justify-center rounded-full border-[3px] border-[#e8e8e8] bg-[linear-gradient(#1d8a58_0%,#1d8a58_30%,#3cc363_30%,#3cc363_100%)] text-[15px] text-white shadow-[0_1px_3px_#666]">66%</div>
      </div>
      {/* Poi popup */}
      <div className="absolute left-[1267px] top-[54px] flex w-[52px] flex-col">
        <div className="flex h-[25px] items-center justify-between bg-[#f6f6f6] pl-[3px] text-[#aaa]"><span>Poi...</span><span className="flex h-[20px] w-[19px] items-center justify-center bg-[#ddd] text-white">×</span></div>
        <div className="flex h-[23px] items-center justify-center border border-[#444] bg-[#efefef] shadow-[1px_1px_2px_#888]">开始</div>
      </div>
      {/* dialog */}
      <div className="absolute left-[617px] top-[220px] flex h-[291px] w-[490px] flex-col border border-[#5b9bd5] bg-[#f0f0f0] shadow-[0_2px_6px_#777]">
        <div className="flex h-[27px] items-center justify-between bg-white pl-[3px] pr-[9px]"><span>钢筋输入助手-梁次梁加筋</span><X size={15} strokeWidth={1.2} color="#222" /></div>
        <div className="mx-[5px] mt-[2px] flex h-[28px] items-center justify-center border border-[#888] bg-white font-['Liberation_Serif',serif] text-[16px] font-bold">6</div>
        <div className="mt-[11px] flex pl-[5px]"><span className="w-[267px]">1.输入格式</span><span>2.输入说明</span></div>
        <div className="mt-[4px] flex h-[159px] gap-[6px] pl-[5px] pr-[7px]">
          <div className="flex w-[252px] flex-col border border-[#aaa] px-px pt-px">
            <div className="flex-1 leading-[17px]">
              <div className="h-[16px] bg-[#c6d9e9] pl-[3px]">4</div>
              <div className="pl-[3px]">4C16(2)</div>
              <div className="pl-[3px]">4C16(2)/3C18(4)</div>
            </div>
            <div className="flex h-[18px] items-center justify-between border-t border-white pr-[2px]">
              <span className="flex items-center"><ChevronLeft size={12} color="#444" className="ml-[4px]" /><span className="ml-[2px] h-[15px] w-[17px] bg-[#cdcdcd]" /></span>
              <ChevronRight size={12} color="#444" />
            </div>
          </div>
          <div className="flex-1 border border-[#aaa] px-[2px] pt-[2px] leading-[17px]">数量，表示次梁两侧共增加的箍筋数量，箍筋的信息和长度与梁一致。</div>
        </div>
        <div className="mt-[11px] flex justify-end gap-[34px] pr-[21px]">
          <div className="flex h-[20px] w-[58px] items-center justify-center border-2 border-[#0078d7] bg-[#e1e1e1]">确定</div>
          <div className="flex h-[20px] w-[58px] items-center justify-center border border-[#adadad] bg-[#e1e1e1]">取消</div>
        </div>
      </div>
      {/* sogou bar */}
      <div className="absolute left-[1163px] top-[412px] flex h-[26px] w-[202px] items-center">
        <div className="z-10 flex h-[23px] w-[23px] shrink-0 rotate-[-14deg] items-center justify-center rounded-[4px] bg-[#ef5a28] text-[18px] font-bold text-white">S</div>
        <div className="flex h-[23px] flex-1 items-center gap-[6px] bg-[#ffffffee] pl-[7px] text-[#0f6cc0]">
          <span className="text-[14px] font-bold">中</span>
          <Moon size={15} fill="#1f7fd0" color="#1f7fd0" />
          <span className="w-[14px] text-[13px] font-bold leading-none">°,</span>
          <Mic size={16} color="#1f7fd0" strokeWidth={2.5} />
          <Keyboard size={18} color="#1f7fd0" strokeWidth={2.2} />
          <span className="h-[13px] w-[15px] rounded-full bg-[#b8c4d0]" />
          <Shirt size={17} fill="#1f7fd0" color="#1f7fd0" />
          <Wrench size={16} fill="#1f7fd0" color="#1f7fd0" />
        </div>
      </div>
    </div>
  );
}
